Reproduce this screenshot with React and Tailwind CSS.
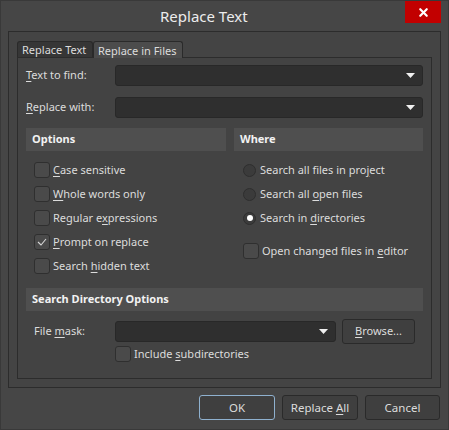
import { X } from "lucide-react";

// mnemonic letter
function U({ children }) {
  return <span className="underline underline-offset-[2px] decoration-1">{children}</span>;
}

function Arrow() {
  return (
    <svg width="9" height="5" viewBox="0 0 9 5" className="shrink-0">
      <path d="M0 0h9L4.5 5z" fill="#f0f0f0" />
    </svg>
  );
}

function Combo({ className }) {
  return (
    <div
      className={
        "h-[21px] flex items-center justify-end pr-[7px] rounded-[3px] bg-[#2f2f2f] border border-[#282828] " +
        className
      }>
      <Arrow />
    </div>
  );
}

function Check({ checked, children }) {
  return (
    <div className="flex items-center h-[16px] gap-[3px]">
      <div className="w-[16px] h-[16px] rounded-[3px] bg-[#4a4a4a] border border-[#2f2f2f] flex items-center justify-center shrink-0">
        {checked && (
          <svg width="10" height="8" viewBox="0 0 10 8">
            <path d="M1 4l3 3 5-6" fill="none" stroke="#d8d8d8" strokeWidth="1.1" />
          </svg>
        )}
      </div>
      <span>{children}</span>
    </div>
  );
}

function Radio({ checked, children }) {
  return (
    <div className="flex items-center h-[16px] gap-[4px]">
      <div className="w-[13px] h-[13px] rounded-full bg-[#3b3b3b] border border-[#2e2e2e] flex items-center justify-center shrink-0">
        {checked && <div className="w-[6px] h-[6px] rounded-full bg-white" />}
      </div>
      <span>{children}</span>
    </div>
  );
}

function Header({ children, className }) {
  return (
    <div
      className={
        "h-[23px] bg-[#4f4f4f] flex items-center px-[6px] font-bold text-[#f2f2f2] " +
        className
      }>
      {children}
    </div>
  );
}

function Button({ children, primary, className }) {
  return (
    <div
      className={
        "h-[25px] rounded-[3px] bg-[#3f3f3f] flex items-center justify-center border " +
        (primary ? "border-[#8fb1cf] " : "border-[#2a2a2a] ") +
        className
      }>
      {children}
    </div>
  );
}

export default function App() {
  return (
    <div
      className="w-[449px] h-[430px] bg-[#464646] border border-[#393939] flex flex-col text-[11px] text-[#dcdcdc] select-none"
      style={{ fontFamily: '"Segoe UI", "Noto Sans", "Open Sans", sans-serif' }}>
      {/* Title bar */}
      <div className="h-[30px] flex items-start shrink-0">
        <div className="ml-[159px] mt-[5px] text-[15px] text-[#ececec] leading-[20px]">
          Replace Text
        </div>
        <div className="ml-auto mr-[7px] w-[36px] h-[22px] bg-[#c20000] flex items-center justify-center">
          <X size={13} strokeWidth={4} color="#ffffff" />
        </div>
      </div>

      {/* Frame */}
      <div className="mx-[7px] h-[357px] border border-[#2c2c2c] bg-[#444444] px-[8px] pt-[8px] pb-[8px] flex flex-col">
        {/* Tabs */}
        <div className="flex items-end h-[17px] whitespace-nowrap">
          <div className="h-[16px] px-[4px] w-[76px] bg-[#363636] border border-b-0 border-[#2a2a2a] rounded-t-[3px] flex items-center leading-none">
            Replace Text
          </div>
          <div className="h-[17px] w-[90px] px-[4px] bg-[#4c4c4c] border border-b-0 border-[#2a2a2a] rounded-t-[3px] flex items-center leading-none -mb-px relative">
            Replace in Files
          </div>
        </div>

        {/* Panel */}
        <div className="flex-1 border border-[#2c2c2c] bg-[#434343] pl-[8px] pr-[8px] pt-[7px] flex flex-col">
          <div className="flex items-center h-[21px]">
            <span className="w-[89px]">
              <U>T</U>ext to find:
            </span>
            <Combo className="w-[308px]" />
          </div>
          <div className="flex items-center h-[21px] mt-[11px]">
            <span className="w-[89px]">
              <U>R</U>eplace with:
            </span>
            <Combo className="w-[308px]" />
          </div>

          <div className="flex mt-[10px]">
            {/* Options */}
            <div className="w-[200px] flex flex-col">
              <Header>Options</Header>
              <div className="pl-[8px] pt-[11px] flex flex-col gap-[8px]">
                <Check>
                  <U>C</U>ase sensitive
                </Check>
                <Check>
                  <U>W</U>hole words only
                </Check>
                <Check>
                  Regular e<U>x</U>pressions
                </Check>
                <Check checked>
                  <U>P</U>rompt on replace
                </Check>
                <Check>
                  Search <U>h</U>idden text
                </Check>
              </div>
            </div>
            {/* Where */}
            <div className="ml-[8px] w-[189px] flex flex-col">
              <Header>Where</Header>
              <div className="pl-[9px] pt-[11px] flex flex-col gap-[8px]">
                <Radio>
                  Search all files in pro<U>j</U>ect
                </Radio>
                <Radio>
                  Search all <U>o</U>pen files
                </Radio>
                <Radio checked>
                  Search in <U>d</U>irectories
                </Radio>
                <div className="mt-[9px]">
                  <Check>
                    Open changed files in <U>e</U>ditor
                  </Check>
                </div>
              </div>
            </div>
          </div>

          <Header className="mt-[14px] w-[397px]">Search Directory Options</Header>
          <div className="flex items-center h-[21px] mt-[10px]">
            <span className="w-[89px] pl-[8px]">
              File <U>m</U>ask:
            </span>
            <Combo className="w-[221px]" />
            <Button className="ml-[6px] w-[73px] h-[22px]">
              <span>
                <U>B</U>rowse...
              </span>
            </Button>
          </div>
          <div className="ml-[89px] mt-[4px]">
            <Check>
              Include <U>s</U>ubdirectories
            </Check>
          </div>
        </div>
      </div>

      {/* Buttons */}
      <div className="flex mt-[7px] pl-[198px] gap-[7px] text-[11.5px]">
        <Button primary className="w-[76px]">
          OK
        </Button>
        <Button className="w-[76px]">
          <span>
            Replace <U>A</U>ll
          </span>
        </Button>
        <Button className="w-[75px]">Cancel</Button>
      </div>
    </div>
  );
}
